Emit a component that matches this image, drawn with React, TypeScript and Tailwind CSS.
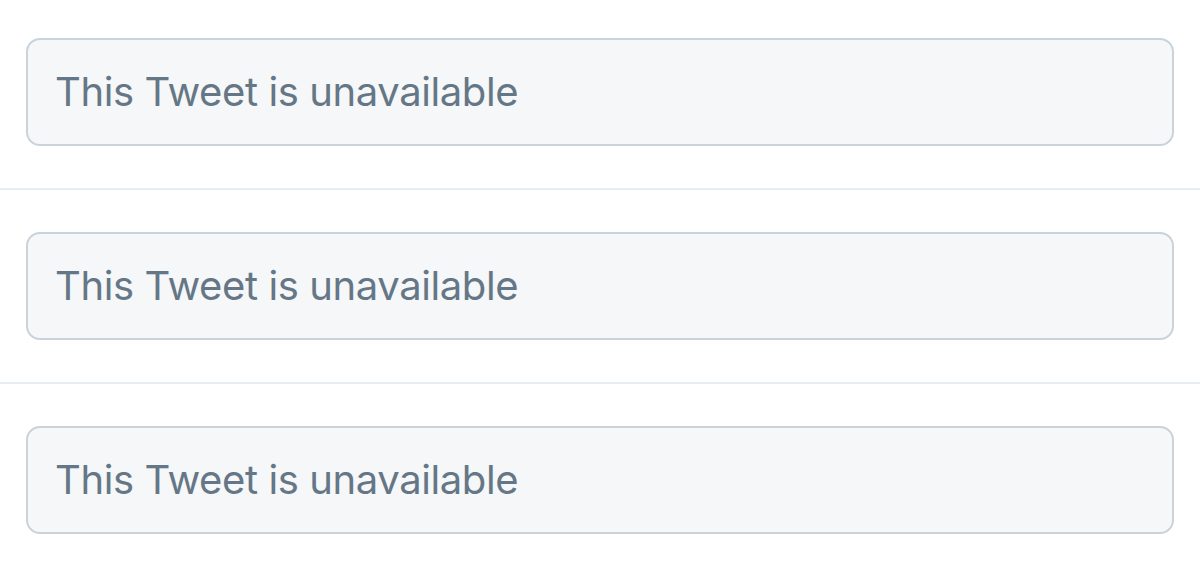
import React from "react";

const UnavailableTweet = ({ first }: { first?: boolean }) => (
  <div className={`px-[26px] pb-[42px] ${first ? "pt-[38px]" : "pt-[42px]"}`}>
    <div className="h-[108px] flex items-center rounded-[14px] border-2 border-[#c9d3dc] bg-[#f5f7f9] pl-[27px]">
      <span className="text-[40px] leading-none text-[#657786] tracking-[-0.4px]">This Tweet is unavailable</span>
    </div>
  </div>
);

export default function App() {
  return (
    <div className="w-[1200px] h-[571px] overflow-hidden bg-white font-['Inter',sans-serif]">
      <UnavailableTweet first />
      <div className="h-[2px] bg-[#e6ecf0]" />
      <UnavailableTweet />
      <div className="h-[2px] bg-[#e6ecf0]" />
      <UnavailableTweet />
    </div>
  );
}
